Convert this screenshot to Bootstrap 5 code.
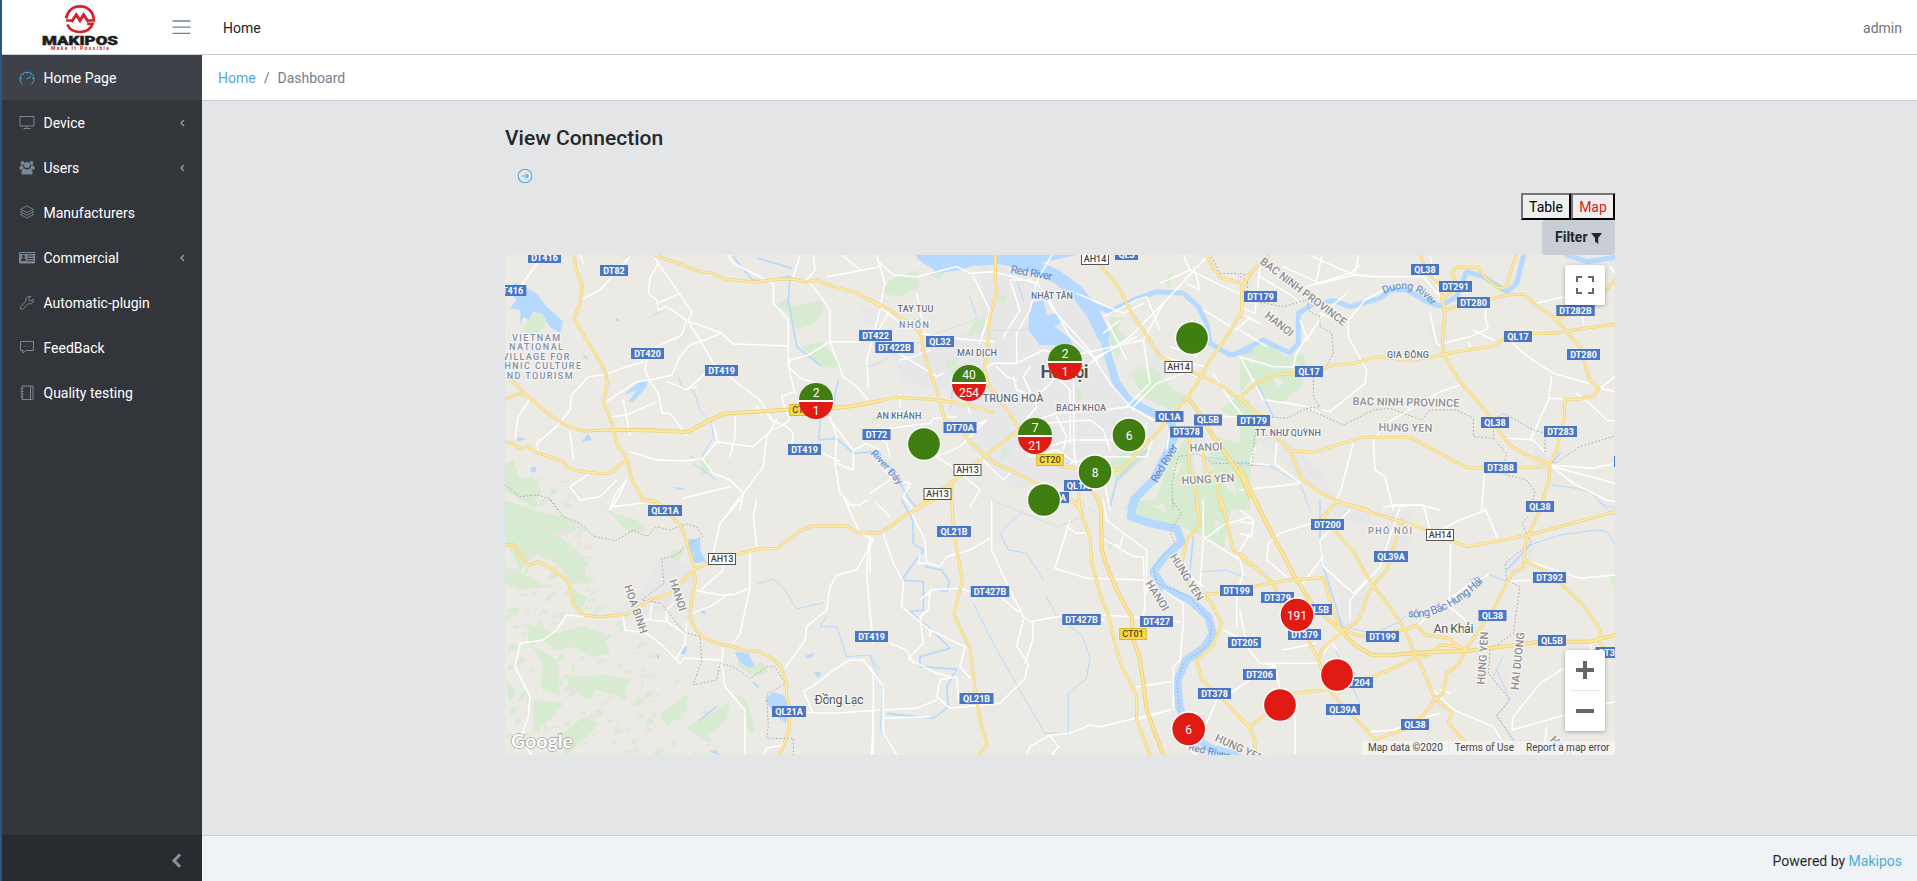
<!DOCTYPE html>
<html lang="en">
<head>
<meta charset="utf-8">
<title>Dashboard</title>
<link href="https://cdn.jsdelivr.net/npm/bootstrap@5.3.0/dist/css/bootstrap.min.css" rel="stylesheet">
<style>
body{font:14px/1.5 Roboto,sans-serif;color:#23282c;background:#e4e5e6;height:100vh;overflow:hidden;border-left:2px solid #28587f}
a{text-decoration:none;color:#4dabdc}
.topbar{height:55px;border-bottom:1px solid #c8ced3}
.topbar>a,.topbar>span{padding-top:2px}
.brand-box{width:155px;height:54px}
.side{width:200px;background:#323539}
.side .nav-link{height:45px;padding:1px 16px 0 16px;color:#fff;border-radius:0}
.side .nav-link.active{background:#3e4148}
.side .ico{width:18px;height:18px;margin-right:8px;margin-left:-.5px;margin-top:-1px;color:#7b8795;flex:none}
.side .active .ico{color:#4f9fd3}
.side .chev{width:6px;height:8px;color:#8b96a3;margin-right:1px}
.minimizer{height:46px;background:#282b2f;color:#8893a1;padding:3px 20px 0 0}
.crumbs{height:46px;border-bottom:1px solid #c8ced3;padding:1px 0 0 16px}
.crumbs .breadcrumb-item+.breadcrumb-item{color:#73818f}
.crumbs .breadcrumb-item+.breadcrumb-item::before{color:#73818f}
.panel{width:1110px;margin:25px auto 0;position:relative;left:.5px}
.panel h1{font-size:21px;font-weight:500;line-height:25px;padding-bottom:2px}
.switch button{border:2px outset #222;border-color:#767676 #212121 #212121 #767676;background:#efefef;height:27px;width:50px;padding:0;line-height:22px;color:#000}
.switch button.on{color:#e01b13;width:44px}
.filter{background:#c8ced3;border:0;border-radius:3.5px;height:35px;width:73px;padding:0;font-weight:700;font-size:14px;color:#23282c}
.mapbox{height:500px}
.ctl{background:#fff;border-radius:2px;box-shadow:0 1px 4px rgba(0,0,0,.3);width:40px;right:10px}
.terms{font-size:10px;line-height:14px;color:#444;gap:1px}
.terms span{background:rgba(245,245,245,.75);padding:0 5.5px;white-space:nowrap}
.foot{height:46px;background:#f0f3f5;border-top:1px solid #c8ced3;padding:6px 15px 0 0}
svg text{font-family:Roboto,sans-serif}
</style>
</head>
<body class="d-flex flex-column">
<header class="topbar bg-white d-flex align-items-center flex-shrink-0">
  <div class="brand-box d-flex justify-content-center">
    <svg width="80" height="54" viewBox="0 0 80 54">
      <g fill="none" stroke="#d3232b" stroke-width="2.7">
        <path d="M26.200 20.500H32.500L36.300 14.500L40 20.500L43.600 14.500L47.400 20.500H53.800C53.800 12 48 6.400 40 6.400C32 6.400 27 12 26.200 18.500"/>
        <path d="M27.300 24.500C29.500 29.500 34 32 40 32C46 32 50.800 28.800 52.700 23.800H47.200"/>
        <path d="M31.500 22L36.300 14.600L40 21L43.600 14.600L48.500 22" stroke-width="2.300"/>
      </g>
      <text x="2" y="44.600" font-size="12.500" font-weight="900" fill="#1e1e20" stroke="#1e1e20" stroke-width=".5" textLength="76" lengthAdjust="spacingAndGlyphs">MAKIPOS</text>
      <text x="11" y="50" font-size="5" font-weight="700" fill="#d3232b" textLength="58">Make It Possible</text>
    </svg>
  </div>
  <svg width="19" height="16" viewBox="0 0 19 16" style="margin-left:15px" stroke="#73818f" stroke-width="1.300"><path d="M.5 2H18.500M.5 8.200H18.500M.5 14.300H18.500"/></svg>
  <a class="text-body ms-4" href="#" style="padding-left:8px">Home</a>
  <span class="ms-auto text-secondary" style="padding-right:15px">admin</span>
</header>
<div class="d-flex flex-grow-1">
  <nav class="side d-flex flex-column">
    <div class="nav flex-column flex-nowrap flex-grow-1">
      <a class="nav-link active d-flex align-items-center" href="#"><svg class="ico" viewBox="0 0 18 18" fill="none" stroke="currentColor"><path d="M4.500 15.500A7 7 0 1 1 13.500 15.500M2 9.500H4M9 3V5M14 9.500H16M4.300 4.800L5.500 6M13.700 4.800L12.500 6M8.500 10L13 7.500"/></svg>Home Page</a>
      <a class="nav-link d-flex align-items-center" href="#"><svg class="ico" viewBox="0 0 18 18" fill="none" stroke="currentColor"><path d="M2 2.500H16V12H2ZM9 12V14.500M5.500 14.500H12.500"/></svg>Device<svg class="chev ms-auto" viewBox="0 0 6 8" fill="none" stroke="currentColor" stroke-width="1.500"><path d="M5 1L2 4L5 7"/></svg></a>
      <a class="nav-link d-flex align-items-center" href="#"><svg class="ico" viewBox="0 0 18 18" fill="currentColor"><circle cx="4.500" cy="4" r="2"/><circle cx="13.500" cy="4" r="2"/><circle cx="9" cy="6" r="3"/><path d="M1.500 10.500V8.500Q1.500 6.500 3 6.500H5Q5.200 8.600 6.200 9.200Q4.500 9.500 4 10.500ZM16.500 10.500V8.500Q16.500 6.500 15 6.500H13Q12.800 8.600 11.800 9.200Q13.500 9.500 14 10.500ZM3.500 15.500Q3 9.500 6.200 9.500Q9 11.500 11.800 9.500Q15 9.500 14.500 15.500Z"/></svg>Users<svg class="chev ms-auto" viewBox="0 0 6 8" fill="none" stroke="currentColor" stroke-width="1.500"><path d="M5 1L2 4L5 7"/></svg></a>
      <a class="nav-link d-flex align-items-center" href="#"><svg class="ico" viewBox="0 0 18 18" fill="none" stroke="currentColor" stroke-width=".9"><path d="M9 2L15.500 5.300L9 8.600L2.500 5.300ZM4 7.200L2.500 8L9 11.200L15.500 8L14 7.200M4 9.700L2.500 10.500L9 14L15.500 10.500L14 9.700"/></svg>Manufacturers</a>
      <a class="nav-link d-flex align-items-center" href="#"><svg class="ico" viewBox="0 0 18 18"><rect x="1" y="3" width="16" height="11.500" rx="1" fill="currentColor"/><g fill="#323539"><circle cx="5.500" cy="7.300" r="1.500"/><path d="M3 12Q3 9 5.500 9Q8 9 8 12ZM9 6.500H15.500V7.500H9ZM9 9H15.500V10H9ZM9 11.300H15.500V12.200H9ZM2 4H16V4.900H2Z"/></g></svg>Commercial<svg class="chev ms-auto" viewBox="0 0 6 8" fill="none" stroke="currentColor" stroke-width="1.500"><path d="M5 1L2 4L5 7"/></svg></a>
      <a class="nav-link d-flex align-items-center" href="#"><svg class="ico" viewBox="0 0 18 18" fill="none" stroke="currentColor"><path d="M13 2.500Q9.500 1.300 8 4.500Q7.600 6 8 7.300L2.600 12.700Q1.800 14.200 3 15Q4.200 15.700 5.200 14.800L10.300 9.700Q13 10.500 14.700 8.500Q15.800 7 15.300 5L13 7L11 6.500L10.700 4.700Z"/></svg>Automatic-plugin</a>
      <a class="nav-link d-flex align-items-center" href="#"><svg class="ico" viewBox="0 0 18 18" fill="none" stroke="currentColor"><path d="M2.500 2.500H15.500V11.500H7.500L5 14V11.500H2.500Z"/><path d="M6 7.300H12.500" stroke-dasharray="1 1.300" opacity=".6"/></svg>FeedBack</a>
      <a class="nav-link d-flex align-items-center" href="#"><svg class="ico" viewBox="0 0 18 18" fill="none" stroke="currentColor"><path d="M4 2H15V15.500H4ZM12.500 2V15.500M2.800 4.500H5.500M2.800 7.300H5.500M2.800 10.200H5.500M2.800 13H5.500"/></svg>Quality testing</a>
    </div>
    <div class="minimizer d-flex align-items-center justify-content-end"><svg width="12" height="16" viewBox="0 0 12 16" fill="none" stroke="currentColor" stroke-width="3"><path d="M10 2.500L4 8.700L10 14.800"/></svg></div>
  </nav>
  <div class="d-flex flex-column flex-grow-1">
    <div class="crumbs bg-white d-flex align-items-center">
      <ol class="breadcrumb mb-0"><li class="breadcrumb-item"><a href="#">Home</a></li><li class="breadcrumb-item">Dashboard</li></ol>
    </div>
    <main class="flex-grow-1">
      <div class="panel">
        <h1 class="mb-0">View Connection</h1>
        <div class="d-flex" style="height:40px;padding:15px 0 0 12px"><svg width="16" height="16" viewBox="0 0 16 16" fill="none" stroke="#5aa9dc" stroke-width="1.100"><circle cx="8" cy="8" r="6.800"/><path d="M4.500 8H11M8.700 5.500L11.200 8L8.700 10.500"/></svg></div>
        <div class="switch d-flex justify-content-end"><button>Table</button><button class="on">Map</button></div>
        <div class="d-flex justify-content-end"><button class="filter">Filter <svg width="11" height="11" viewBox="0 0 11 11" fill="#23282c"><path d="M0 0H11L7.200 5V11L4 8.500V5Z"/></svg></button></div>
        <div class="mapbox position-relative overflow-hidden">
          <svg id="map" width="1110" height="500" viewBox="505 255 1110 500" class="d-block"></svg>
          <div class="ctl position-absolute d-flex" style="top:10px;height:40px"><svg width="40" height="40" viewBox="0 0 40 40" fill="none" stroke="#666" stroke-width="2"><path d="M12 17V12H17M23 12H28V17M28 23V28H23M17 28H12V23"/></svg></div>
          <div class="ctl position-absolute" style="top:395px;height:81px"><svg class="d-block" width="40" height="81" viewBox="0 0 40 81"><path d="M11 20H29M20 11V29M11 61H29" stroke="#666" stroke-width="4"/><path d="M5 40.500H35" stroke="#e6e6e6"/></svg></div>
          <div class="terms position-absolute bottom-0 end-0 d-flex"><span>Map data ©2020</span><span>Terms of Use</span><span>Report a map error</span></div>
        </div>
      </div>
    </main>
    <footer class="foot d-flex align-items-center justify-content-end">Powered by&nbsp;<a href="#">Makipos</a></footer>
  </div>
</div>
<script>
// Map tiles: each tile has its own origin, three path units make one pixel.
const tiles = {A:[500,250],B:[870,250],C:[1240,180],D:[500,500],E:[870,500],F:[1240,500]};
let out = '<rect x="505" y="255" width="1110" height="500" fill="#ebeae5"/>';
function layer(data, attrs, close) {
  for (const k in data) {
    const d = data[k].split(';').map(p => 'M' + p.trim() + (close ? 'Z' : '')).join('');
    out += `<path transform="translate(${tiles[k]}) scale(.33333)" d="${d}" ${attrs}/>`;
  }
}
const line = 'fill="none" stroke-linejoin="round" stroke-linecap="round" ';

// built-up area
layer({B:"330,20 480,90 620,150 690,230 720,360 760,450 860,530 800,640 640,720 520,690 440,720 330,620 260,540 230,420 100,400 60,300 180,290 310,240 340,160;760,380 870,290 900,340 880,400;950,560 1100,600 1140,700 1050,640",
 A:"1080,170 1140,180 1140,240 1100,220;540,240 580,230 560,280 530,300",
 C:"40,660 150,790 250,880 300,980 190,900 60,780;560,430 620,440 620,520 580,490;880,780 940,850 930,890 880,850",
 D:"480,170 570,190 590,260 530,330 400,350 330,340 420,280",
 F:"255,10 360,10 410,80 300,60;440,40 520,30 500,190 430,180;300,290 370,250 400,300 310,400;790,190 880,130 870,200 820,230;640,620 585,580 550,640"}, 'fill="#e7e7e8"', true);
// parks and forest
layer({A:"90,195 120,182 140,220 110,252 68,245;825,165 860,145 880,170 965,150 970,175 945,220 885,238 880,195;905,290 965,275 1000,320 1025,352 965,352 930,320;600,630 628,628 625,670 605,675;15,640 40,630 60,690 100,680 125,730 90,765 15,720;365,18 400,15 390,25",
 B:"60,90 140,60 150,110 90,140 35,130;170,70 230,60 210,90;310,215 350,205 335,245 290,260;380,130 410,140 405,158 385,155;230,330 260,325 265,390 235,370;0,510 30,490 20,515;620,410 640,430 625,455 615,440;720,200 760,205 740,240 770,260 740,330 720,280;880,90 905,70 900,120;780,370 850,350 910,420 960,440 900,480 820,440;730,500 745,530 770,620 730,590;950,560 985,700 1040,560 1140,590 1140,780 990,780 850,780 890,650 920,600;720,640 760,600 850,600 740,700;600,350 590,370 582,360;400,590 425,600 390,640;1050,480 1100,440 1140,450 1140,530",
 C:"0,530 60,485 100,500 135,530 190,522 200,560 185,620 120,672 70,650 40,590 0,640;0,670 40,690 90,710 60,760 30,850 0,840",
 E:"760,20 800,0 1040,0 1080,30 1060,150 1000,110 940,80 900,70 800,60;650,20 680,30 670,42;700,100 730,130 720,150",
 F:"1105,230 1125,222 1125,265",
 D:"15,0 130,40 200,50 230,90 180,110 250,170 260,250 215,250 170,190 110,160 60,210 15,120;80,370 170,400 240,380 310,400 330,460 270,470 220,440 170,450 120,420 90,440;100,440 170,480 180,590 120,560 130,500;200,530 320,525 390,540 370,590 290,570 270,600 210,570;512,155 555,145 535,185 515,180;710,490 740,468 760,500 785,485 805,515 765,530 730,510;15,200 90,230 130,260 60,270 15,250;300,10 340,40 410,60 440,90 390,100 350,60;210,265 260,290 240,330 210,300;100,600 190,610 160,650 100,700;15,540 50,570 30,610;15,330 60,320 50,350;190,700 250,650 300,670 200,765;480,640 560,590 560,630 500,680;560,680 640,640 690,600 680,660 610,720;710,580 740,600 755,650 765,700 750,700"}, 'fill="#d6ebd0"', true);
// bare ground inside the river-bank parks
layer({B:"1000,640 1030,650 1015,690;1060,700 1090,690 1100,740;905,650 935,640 920,680",
 C:"100,590 130,600 115,630;20,540 45,530 40,560;150,545 175,550 165,580", E:"1030,70 1050,60 1045,110;850,20 880,10 890,40"}, 'fill="#ebeae5"', true);
// relief: small woodland patches and shaded slopes on the south-west hills
let s = 11; const rnd = () => (s = (s * 16807) % 2147483647) / 2147483647;
for (let i = 0; i < 230; i++) {
  const y = 478 + rnd() * 277, lim = y < 600 ? 70 + (y - 478) * .15 : 95 + (y - 600) * .95;
  const x = 505 + rnd() * lim, w = 2 + rnd() * 7, h = 1.5 + rnd() * 5;
  out += `<path d="M${x} ${y}l${w*.5} ${-h}l${w*.3} ${h*.6}l${w*.5} ${-h*.4}l${-w*.4} ${h*1.2}l${-w*.4} ${-h*.1}l${-w*.6} ${h*.5}z" fill="${i%2 ? '#d6ebd0' : '#e5e4de'}"/>`;
}
// water
layer({A:"15,110 50,100 80,115 110,130 140,170 190,215 180,250 150,230 125,190 100,185 85,210 70,200 60,225 62,180 30,175 50,150;345,212 352,203 360,213;420,395 445,388 440,410 400,455 385,455 410,420 370,435 400,410;245,308 265,325 258,330;92,652 108,652 108,667 92,667;265,550 275,570 245,575;55,560 78,568 50,575;510,710 555,715 540,720;440,206 505,178 470,190",
 B:"155,15 620,15 480,45 340,35 270,60 200,70;490,158 520,150 530,195 560,190 582,215 552,228 600,265 610,295 560,285 510,285 475,240 478,190",
 D:"565,117 600,117 602,155 620,185 585,190 570,150;705,455 745,460 765,500 740,500 715,480;795,600 820,577 850,585 862,610 860,670 830,650;545,445 562,440 555,465 540,460;600,335 615,330 617,345;470,470 480,462 475,480;917,467 940,458 942,467 925,476;942,517 965,517 955,535;625,755 650,752 660,765"}, 'fill="#b5d9ff"', true);
const water = line + 'stroke="#b5d9ff" stroke-width=';
layer({B:"155,15 200,45 260,35 400,25 480,50",}, water + '"34"');
layer({B:"380,20 470,40 560,80 620,125 670,190 700,255"}, water + '"40"');
layer({B:"700,255 715,320 740,400 775,450 830,480 905,515 912,565 880,630 850,690 800,740 785,780",
 E:"790,0 782,50 850,72 920,85 935,125 885,170 850,215 880,262 960,300 1015,350 1028,400 1005,440 950,480 922,540 928,620 960,700 1020,745 1100,765"}, water + '"24"');
layer({B:"640,130 670,165 720,185 790,150 860,125 940,130 985,170 1010,220 1020,280 1080,315 1140,300",
 C:"-20,525 70,480 110,500 150,518 175,490 175,400 215,375 280,362 330,380 420,355 450,330 500,330 560,365 600,378 650,350 680,275 730,290 800,335 830,310 850,228;980,225 1040,245 1125,232"}, water + '"15"');
layer({A:"700,20 755,88 800,95 870,78 865,150 890,290 960,345;775,25 875,55;1015,390 1000,460;965,480 955,570 1010,565 1060,610 1140,605",
 B:"0,605 60,650 120,750 145,780;830,600 740,690 720,770;590,640 640,640",
 C:"55,620 100,710;935,850 960,820",
 D:"760,545 775,562;650,620 600,660",
 E:"95,0 128,60 130,130 160,150 95,240;95,240 160,245 160,330 120,335 190,395 240,445 150,470 150,500 260,508 230,560 235,620 190,655 50,640;165,200 215,210 238,245 230,275 205,270;970,110 960,210",
 F:"240,0 240,110 250,200 310,390;870,135 800,210"}, water + '"5"');
layer({A:"535,380 545,410 580,420 600,480 635,520 640,560 600,630 570,620;580,640 650,690",
 B:"300,140 320,200;440,90 460,150;250,400 240,480;1000,620 1140,640",
 C:"0,855 90,858 180,910 210,990;935,915 1010,925 1060,940 1080,970 1125,985",
 D:"775,250 820,237 855,270 890,327 970,308;980,350 960,380 1010,380 1040,470 1110,465 1140,510",
 E:"460,30 390,100 415,150 470,160 520,240;530,290 560,350 635,405 660,470 650,535 595,580 595,700 525,700 420,520 370,430 310,310;0,470 40,570 30,690 80,765;990,215 1070,210 1130,235",
 F:"310,380 400,400 470,370 500,345;690,240 750,225 800,245;870,135 960,105 1070,90 1100,95 1125,130;1075,0 1125,50;280,435 300,480 360,610;770,510 810,600 770,650 830,730;790,470 760,530"}, water + '"3"');
// minor roads
const white = {A:"130,15 65,105;390,20 340,75 300,120 245,148;475,40 450,85 445,130 470,150 475,180 500,170 560,210 545,255 470,290 440,330 435,360 450,395 475,430 487,490 510,490 560,555;465,25 575,185 565,215 600,270 640,340 720,405 780,450 815,510 860,530 880,550 875,590 950,600 1020,635;470,160 540,130;570,215 665,250 700,282 865,288;665,250 570,285 540,320 515,375 450,390 410,395 350,435 320,455;430,335 380,350 310,375 265,380 215,435 210,480 170,530 110,580 115,600;560,418 600,385 615,370;500,395 560,418 590,410;370,450 390,555;335,500 380,495 465,458;90,445 55,500 45,565;210,545 220,630;390,605 470,630 560,632 610,625 650,575 760,590 815,540 840,530;640,525 655,580;705,500 705,560 690,620;610,630 640,670 690,690 730,730 720,780;730,730 790,650 800,560 830,510;730,730 690,780;340,770 380,690 345,735 330,780;270,670 210,710 240,750 300,740 350,690;820,100 820,160 865,210 865,350 885,430;685,15 700,40 820,100;865,350 870,330 925,315 990,275 1080,275;940,15 945,60 920,90 955,130 990,180 990,275 1030,380 1070,410 1105,450;980,80 1040,70 1140,50;880,425 845,440 850,460 870,510 840,530;865,350 900,385 950,400;1105,410 1100,330 1140,180;990,500 1010,560 1005,640 1020,730 1060,770;1010,640 1060,660 1060,600 1100,580 1140,600;990,510 1060,600;770,470 785,495;240,15 250,40;900,15 880,80;550,745 690,710;1020,10 1080,60",
 B:"20,15 45,100 30,170 90,220;20,30 70,75 140,80 260,50 300,70 370,65 430,80 500,100;60,180 20,250 0,270;150,250 250,265 370,275;140,130 160,230;90,330 130,320 180,300;500,95 480,180 440,250 440,340 370,340 350,350;500,95 550,180 650,290 720,400 790,480;545,15 500,95;520,120 600,260 680,330;480,90 420,90 450,180 400,260;440,340 520,300 600,320 640,310 820,270;670,325 800,260;700,200 800,150 830,140 870,240;1010,20 880,160 780,260 660,340;880,160 820,270 840,400 770,470;620,130 760,190 820,160;710,210 740,270 770,330;430,380 440,420 500,440 560,380 600,420 600,580;480,350 460,380 500,470 450,530;440,530 560,490 700,480 780,470 850,510;610,320 612,600 620,660;560,500 590,560 580,600;500,600 600,570 760,570;520,520 660,510 700,540 720,600;440,540 480,620 560,600 620,640;380,350 410,380 440,390;260,500 190,505 180,520 20,540;200,620 260,660 330,720 300,770;200,620 270,590 350,510 270,550;330,620 400,690 420,670;0,545 50,580 60,620;10,620 70,690 120,700 100,740 130,780;60,690 0,730;40,280 200,380 220,370;240,450 290,460 300,490;90,435 90,470;940,15 960,60 1060,110 1110,130;960,60 870,100;950,100 990,120 970,50;1000,180 1100,240 1140,200;870,320 960,340 1010,350;980,380 930,360 900,340;700,250 750,210;1030,370 1080,450 1120,500 1060,500;900,290 980,320;790,470 860,400 940,370;830,520 820,580;920,530 960,540 980,510;600,640 700,620 830,620 850,560;700,680 720,780;900,540 890,600;310,80 360,180 330,280",
 C:"215,228 290,262 345,285 410,290;355,228 345,285;345,285 240,310 130,260;245,230 230,300;60,260 45,400 0,380;60,290 160,350 180,370;410,290 550,290 600,350;360,255 330,280 200,320;240,400 310,430 330,415 375,360 430,330;325,420 325,470 380,570 375,610 270,695 250,690;570,400 590,490 605,500;740,380 735,410 745,445 690,470 610,490;685,485 690,500;820,490 850,520 940,580 1045,610;660,615 600,635 540,670 440,730 400,780 405,870 435,890 460,990;935,590 925,660 880,760 870,780;930,655 975,658;1125,590 1080,625 1125,635;1010,640 1060,680 1100,720 1125,722;805,775 880,780 935,840;930,855 1060,865 1125,850;930,855 1000,910 1100,960 1125,965;940,860 1125,910;340,790 300,940 280,970;735,860 725,990;0,530 60,640 70,660;75,660 145,670 200,680 240,700;180,420 200,470 170,520 160,560 100,560 0,530;430,980 540,975 600,990;0,400 60,430;1025,340 1030,430;890,370 950,355 1020,345;110,790 105,850 180,910 100,920 0,930;45,800 30,850 90,855;570,230 600,350;1110,260 1125,280;200,480 250,400 320,340;700,450 760,480;0,450 80,500",
 D:"720,0 660,70 640,160;770,0 760,50 770,140;340,20 380,15 460,5;750,160 750,265 720,400 700,430;670,190 670,210 600,272;590,272 660,285 700,285 745,265;575,340 630,320 690,280;370,350 375,390 440,400 480,430 540,490 555,475 660,480;455,310 450,360 430,360;450,360 500,365 555,400;500,365 500,330 520,310;560,370 555,430 530,475;670,445 665,490 675,560 735,630 735,765;1035,0 1075,90;1075,95 1120,120 1070,210 1010,225 990,260 980,330 920,380 915,420 855,505;1105,130 1100,220 1115,400;870,635 1000,640 1140,630;910,575 940,640;910,575 950,550 1000,510 1050,480 1090,480 1120,520 1120,765;250,350 200,345 170,390 130,420 60,430 45,500 90,590 85,650 60,720 95,765;850,735 800,745 790,765;1040,15 1080,15 1100,0",
 E:"40,100 70,190 100,245 95,320 180,390 285,440 270,500 300,535;120,30 165,120 170,190 145,190 150,160;175,190 210,200 230,170 300,150 360,115;365,0 365,150 410,250 460,350 480,365 560,350 700,360;180,270 270,265 305,275;390,290 445,335;180,270 175,330 150,350;460,360 440,440 475,490 465,535 390,610 240,625 200,590 210,540 260,530 265,600;490,365 488,420 465,490;600,60 555,205 650,235 820,240;590,80 620,100 660,100;700,0 710,60 760,100 830,150 830,280;690,110 790,170 820,170 825,320 820,345;700,345 780,350 930,365;880,270 940,310 940,370 930,480 910,500 910,630;800,560 900,545;800,660 900,630 690,680 660,675 600,700 540,705 480,740 470,765;540,705 565,740 545,765;20,10 60,50;40,630 140,625 200,600;40,655 180,650;0,100 0,220;150,350 160,430 120,470 115,475 200,520 240,530;60,430 110,450 130,490;0,500 40,560 40,640 40,700 80,765;10,640 5,765;185,270 150,300;180,390 180,410;1000,0 1000,110 1110,180 1120,220 1100,280 1100,380;1000,120 990,260;1000,120 1060,75 1140,50;950,220 1000,260;1140,100 1100,170 1140,180;760,100 750,140 720,130;1060,390 1100,410;1040,600 1010,670;1060,595 1140,540;950,740 980,765;0,330 10,430",
 F:"0,30 40,60 35,110 0,100;0,65 40,70;0,330 20,440 60,490 105,495 120,570 165,640 165,760;60,490 240,490;105,495 60,520;85,130 120,100 220,68;85,130 80,180 140,230;250,170 180,260;330,30 240,120 250,200 340,280 380,240;480,20 420,200 330,300 330,360;455,15 550,15 570,90;600,90 660,60 740,30;735,25 775,120;632,135 628,320 700,380;855,180 1020,235 1125,225;800,245 870,240;745,225 690,250 600,320 550,360 530,380;225,430 130,450;300,390 250,460;310,395 270,420 290,450;640,630 760,680 810,760;580,570 640,630;815,690 820,650 900,550 970,505;920,680 915,730 980,765;815,690 1100,610 1125,605;390,695 460,690 530,660;460,765 540,735 600,755;600,640 560,650;140,390 200,420 240,410;600,570 630,580;1050,430 1070,500"};
layer(white, line + 'stroke="#fff" stroke-width="4.5"');
// rail and provincial borders
layer({B:"0,350 200,250 340,200;370,240 480,240", E:"365,0 560,80 640,50 640,0", A:"1100,350 1140,340"}, line + 'stroke="#dadce0" stroke-width="3"');
const border = {B:"1020,10 1050,70 1100,70 1140,100;1140,640 1030,640 980,610 925,620 905,700 910,780",
 C:"0,280 20,285 25,360 130,380 200,360 210,395 240,410 240,440 275,460 280,520 250,575 220,590 220,650 240,680 200,685 140,715 80,710 45,760 35,860;200,685 310,735 400,690 450,685 545,720 570,690 650,690 700,715 700,770 760,775 760,720 790,700 880,750 915,760 915,820 945,850 1020,800 1125,768;760,775 800,820 785,880 860,900 885,935 870,990",
 D:"150,0 190,50 240,70 280,108 345,123 400,90 440,110 470,80 510,90 560,72 590,80 608,110 570,130 520,170 485,175 492,250 425,300 485,310 550,395 600,410 605,480 580,555 650,540 660,490 700,500 750,535 800,500 825,500 855,550 800,585 805,680 800,715 880,715 880,765",
 A:"15,705 60,740 110,735 150,745 175,780",
 E:"905,0 935,40 900,95 915,130 850,200 860,250 960,290 1025,370 1020,430 940,490 920,550 930,640",
 F:"865,50 845,70 875,130 830,160 795,190 800,240 840,260 820,400 750,450 745,520 810,600 770,645 830,740"};
layer(border, line + 'stroke="#a9a9ad" stroke-width="3" stroke-dasharray="5 6" style="stroke-linecap:butt"');
// highways: casing, then fill
const road = {A:"222,15 228,60 247,105 240,160 222,205 260,270 300,335 318,372 322,400 311,455 328,500 340,535 352,585 382,628 396,690 432,752 465,755 500,775;15,448 50,433 78,435;15,375 50,405 78,435 150,495 205,530 250,543 330,540 450,541 563,546 620,515 672,491 800,483 880,478 1000,474 1060,468 1140,452;15,575 40,582 62,597 82,588 105,606 190,634 202,652 240,664 300,671 335,668 358,645 382,628;465,15 600,65 632,68 670,86 765,97 830,88 875,87 918,95 950,91 1010,113 1070,128 1140,168",
 B:"0,458 75,442 170,447 260,457 330,475 368,486;0,148 60,180 125,225 152,250 160,300 180,365 205,440 225,510 265,530 300,575 345,618 375,640 430,665 480,690 530,715 600,745 625,770;376,15 376,90 382,115 360,200 352,290 343,360 355,405 400,465 445,530;445,540 400,575 345,618 285,665 200,730 130,780;245,700 246,780;690,45 745,110 790,200 820,240 870,320 900,335 950,360 995,378 1050,405 1100,440 1140,470;1010,15 1030,55 1055,85 1105,97;1140,80 1115,105 1115,185 1060,275 1010,345 995,378 955,440 900,500 850,560 800,610 760,655 720,662;1000,610 1005,650 1040,690 1055,780;960,560 955,650 980,730 980,780;540,635 580,650 625,655 627,780;640,700 680,740 693,780;560,750 620,760",
 D:"425,0 465,3 505,40 542,76 560,125 582,205 586,245 575,300 570,350 587,390 610,412 660,432 705,442 728,452 770,452 805,468 840,495 858,545 860,590 868,620 868,690 840,765;15,135 45,135 60,165 85,197 112,185 150,203 205,243 220,315 250,345 300,351 382,342 455,297 510,280 582,208 640,185 720,160 770,148 832,145 900,93 935,78 1035,77 1075,98 1140,99",
 E:"190,0 100,50 35,97 0,99;246,0 250,90 277,240 252,342 270,385 300,440 318,590 335,680 352,733 325,765;626,0 630,30 660,110 665,185 690,285 715,345 735,430 755,500 800,585 800,660 840,765;980,0 990,70 950,120 935,190 960,260 1000,285 1025,310 1055,370 1030,435 980,480 995,540 1020,560 1060,600 1140,685;1000,283 1050,280;1055,0 1090,150 1140,195",
 C:"85,228 20,290 5,340 5,410;0,652 45,612 110,584 200,578 280,556 350,548 410,530 510,541 580,530 650,515 765,497 800,470 870,461 950,459 1000,450 1125,432;543,228 555,270 600,315 608,360 615,400 607,490 612,525 660,605 735,690 785,765 815,800 870,830 928,852;605,355 640,335 645,300 635,275 655,262 715,262 735,292 770,322 790,325 805,310 808,285 828,228;612,393 650,380 750,358 800,345 850,342 900,385 920,395 950,420 975,450 1020,500 1040,570 1050,600 1078,625 1060,648 1015,658 975,658 972,720 950,810 930,852 928,895 905,970;1125,300 1095,335;945,420 990,400;0,655 75,720 110,770 150,812 220,817 365,772 510,772 680,863 740,865 900,860 928,852;150,812 185,895 235,935 295,965 385,990;0,865 60,990",
 F:"905,20 865,105 855,140 852,180 850,205 820,215 800,250 765,320 720,385 680,445 655,495 620,520 610,580 585,598 555,640 500,685 405,718;245,55 295,0;295,5 385,35 420,45 550,85 640,125 680,140 865,105 1125,35;250,50 300,110 345,160 370,210 400,258 460,335 495,390 520,450 540,490 585,598 635,635 625,670 670,720 690,760;485,60 465,130 440,210 400,255 380,290 370,330 350,365 310,392 265,430 245,450 235,478;0,160 100,250 140,350 200,410 235,478 255,540 265,570 350,660 405,718 400,760;45,258 0,262;45,258 150,240 250,233 275,320 300,385 350,405 390,410 495,390 530,375 555,405 630,415 655,440;400,530 470,500 525,472 565,468 600,435 640,438 680,447;165,580 265,568;80,640 30,680 0,655;30,680 45,725 45,760;855,180 900,205 960,250 1020,305 1055,350 1080,390 1080,430 1100,450"};
const major = {B:"955,445 985,485 1030,560 1080,630 1115,680 1140,740", C:"0,865 60,990", E:"685,0 693,30 695,150 715,210 745,280 785,350 790,420 808,470 820,550 830,630 855,700 880,765",
 F:"45,0 100,110 170,240 215,310 305,395 345,435 395,465 450,466 550,457 680,453 800,438 900,425 1050,425 1125,405", A:"330,540 450,541 563,546 620,515 672,491 800,483 880,478 1000,474 1060,468 1140,452"};
layer(road, line + 'stroke="#edd07d" stroke-width="9"'); layer(major, line + 'stroke="#edd07d" stroke-width="12"');
layer(road, line + 'stroke="#fdeaa5" stroke-width="5"'); layer(major, line + 'stroke="#fce699" stroke-width="7"');

// place names: text, centre x, centre y, width, size, colour, weight, angle
const G = '#64728c', P = '#8f8f92', R = '#5b86c9', K = '#505357';
[["VIETNAM",536,338,48,9,'#8290ab',500],["NATIONAL",536,347,54,9,'#8290ab',500],["VILLAGE FOR",536,357,67,9,'#8290ab',500],["ETHNIC CULTURE",536,366,90,9,'#8290ab',500],["AND TOURISM",536,376,73,9,'#8290ab',500],
["TAY TUU",915.5,309,36,9,G,500],["NHỔN",914,325,30,9,'#8290ab',500],["MAI DỊCH",977,353,40,9,G,500],["NHẬT TÂN",1052,296,42,9,G,500],["TRUNG HOÀ",1013,398.500,61,11,G,500],["BACH KHOA",1081,408,50,9,G,500],["AN KHÁNH",899,416,45,9,G,500],["Hà Nội",1064.5,372,48,18,K,700],
["HANOI",1206,447,33,11,P,500,-3],["HUNG YEN",1208,479,53,11,P,500,-3],["BAC NINH PROVINCE",1303.5,291.5,105,11,P,500,37],["HANOI",1279.5,324,33,11,P,500,38],["BAC NINH PROVINCE",1406,402,107,11,P,500,1],["HUNG YEN",1405.500,427.500,54,11,P,500,1],["GIA ĐÔNG",1408,355,42,9,G,500],["TT. NHƯ QUỲNH",1288,433,66,9,G,500],
["HOA BINH",636,609,51,11,P,500,71],["HANOI",678,595,33,11,P,500,71],["Đồng Lạc",839,699,49,12.500,K,400],["HUNG YEN",1187,577,53,11,P,500,58],["HANOI",1157.500,595.500,34,11,P,500,58],["PHỐ NỐI",1390,531,44,9,'#8290ab',500],["An Khải",1453.500,628.500,40,12.500,K,400],["HUNG YEN",1482.500,658,53,11,P,500,-86],["HAI DUONG",1517.500,661,58,11,P,500,-84],["HUNG YEN",1240,748,53,11,P,500,25],["Hai Duong",1570,755,50,11,P,500,45],
["Red River",1031.500,272.500,42,11,R,400,10],["Red River",1164,463,42,11,R,400,-60],["River Đáy",887,467,42,10,R,400,48],["Red River",1209,751,42,10,R,400,13]
].forEach(([t,x,y,w,z,c,b,a]) => out += `<text transform="translate(${x} ${y}) rotate(${a||0})" y="${z*.36}" text-anchor="middle" textLength="${w}" font-size="${z}" font-weight="${b}" fill="${c}" ${c===R?'':'stroke="#f6f5f2" stroke-width="2.5" paint-order="stroke" stroke-linejoin="round"'}>${t}</text>`);
out += `<path id="dr" fill="none" d="M1384 294Q1414 279 1434 309"/><text font-size="10.500" fill="${R}"><textPath href="#dr" textLength="54">Duong River</textPath></text>
<path id="bh" fill="none" d="M1408 617Q1445 621 1488 577"/><text font-size="11" fill="${R}"><textPath href="#bh" textLength="86">sông Bắc Hưng Hải</textPath></text>`;

// road shields, by style
const shield = (list, fill, ink, edge) => list.trim().split(/\s+/).forEach(r => {
  const [t,x,y] = r.split(','), w = edge==='#555' ? 28 : edge ? 27.5 : t.length>5 ? 38.5 : t.length===3 ? 23 : t.length===4 ? 28 : t[0]==='D' ? 33 : 34;
  out += `<rect x="${x-w/2+(edge?.5:0)}" y="${y-5.5}" width="${w-(edge?1:0)}" height="11" fill="${fill}" ${edge?`stroke="${edge}"`:''}/><text x="${x}" y="${+y+3.2}" text-anchor="middle" font-size="9" font-weight="${edge?500:700}" fill="${ink}">${t}</text>`;
});
shield(`DT416,544.5,257.5 DT82,614,270.5 DT416,509.8,290.5 DT420,647.5,353.5 DT419,721.5,370.5 DT419,804.5,449.5 DT422,875.5,335.5 DT422B,894.5,347.5 QL32,940,341.5 DT70A,960,427.5 DT72,876.5,434.5 QL3,1126.5,254.5 QL1A,1169.5,416.5 QL5B,1208,420 DT378,1186.5,432 QL1A,1055,497.5 QL1A,1078,485.5 QL38,1425,269.5 DT291,1455.5,286.5 DT280,1473.5,302.5 DT179,1260.5,296.5 DT282B,1575.5,310.5 QL17,1518,336.5 DT280,1583.5,354.5 QL17,1309,371.5 DT179,1253.5,420.5 QL38,1495,422.5 DT283,1560.5,431.5 DT388,1500.5,467.5 QL38,1540,506.5 DT388,1630.5,461.5 QL21A,665,510.5 DT419,871.5,636.5 QL21A,789,711.5 QL21B,954,531.5 DT427B,990,591.5 DT427B,1081.5,619.5 DT427,1156.5,621.5 DT199,1236.5,590.5 DT205,1244.5,642.5 DT206,1259.5,674.5 DT378,1214.5,693.5 QL21B,976.5,698.5 DT200,1327.5,524.5 QL39A,1391,556.5 DT392,1549.5,577.5 DT379,1277.5,597.5 QL5B,1318,609.5 DT379,1304.5,634.5 DT199,1382.5,636.5 QL38,1492.5,615.5 QL5B,1552,640.5 DT392,1612,652.5 DT204,1356.5,682.5 QL39A,1343,709.5 QL38,1415,724.5`, '#4a76c5', '#fff');
shield('AH13,967.5,470 AH13,937.5,494 AH14,1095,259 AH14,1178.5,367 AH13,722,559 AH14,1440,535', '#fff', '#444', '#555');
shield('CT03,803,410 CT20,1050,460 CT01,1133,634', '#f7d84a', '#554a12', '#d8b92e');

// connection clusters: x, y, connected, disconnected
[[816,401,2,1],[969,383,40,254],[1065,362,2,1],[1035,436,7,21]].forEach(([x,y,g,r]) => out += `<circle cx="${x}" cy="${y}" r="17.500" fill="#fff"/><path d="M${x-17} ${y-1}A17 17 0 0 1 ${x+17} ${y-1}Z" fill="#417e11"/><path d="M${x-17} ${y+1}A17 17 0 0 0 ${x+17} ${y+1}Z" fill="#e01b13"/><g fill="#fff" font-size="12" text-anchor="middle"><text x="${x}" y="${y-4}">${g}</text><text x="${x}" y="${y+14}">${r}</text></g>`);
[[924,444,0,''],[1192,338,0,''],[1044,500,0,''],[1129,435,0,6],[1095,472,0,8],[1297,615,1,191],[1188.700,729,1,6],[1337,675,1,''],[1280,705,1,'']].forEach(([x,y,r,n]) => { out += `<circle cx="${x}" cy="${y}" r="${n===''?16.5:17}" fill="${r?'#e01b13':'#417e11'}" stroke="#fff" stroke-width="1.300"/>`; if (n !== '') out += `<text x="${x}" y="${y+5}" fill="#fff" font-size="12" text-anchor="middle">${n}</text>`; });
out += '<text x="511" y="747.500" font-size="19" font-weight="700" textLength="62" lengthAdjust="spacingAndGlyphs" fill="#fff" stroke="#999" stroke-width="1.300" paint-order="stroke" style="font-family:Lato,sans-serif">Google</text>';
document.getElementById('map').innerHTML = out;
</script>
<script src="https://cdn.jsdelivr.net/npm/bootstrap@5.3.0/dist/js/bootstrap.bundle.min.js"></script>
</body>
</html>
